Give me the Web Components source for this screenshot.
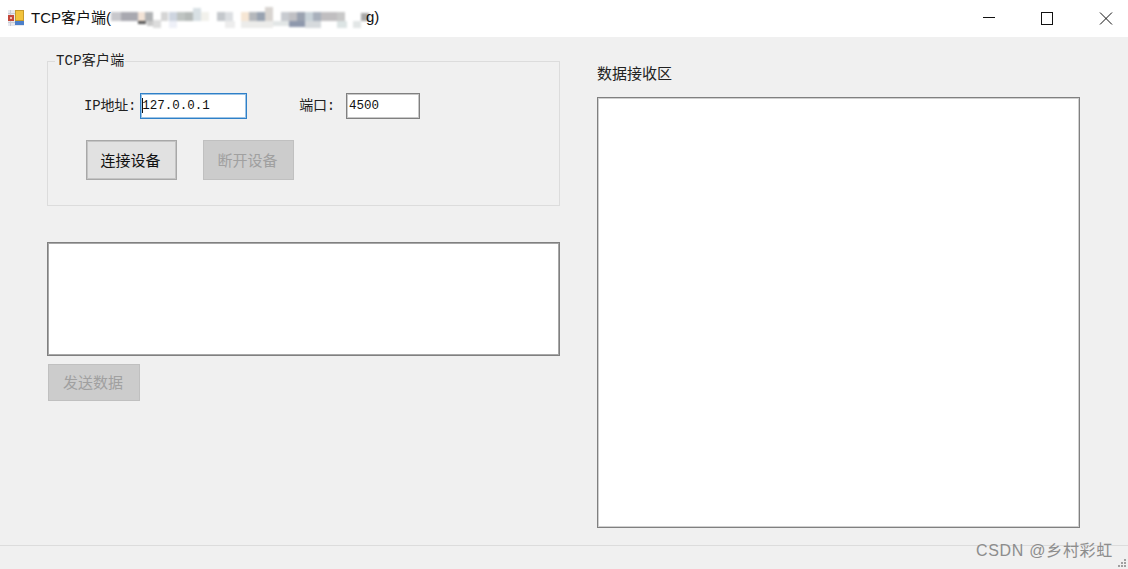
<!DOCTYPE html>
<html>
<head>
<meta charset="utf-8">
<title>TCP客户端</title>
<style>
  html, body { margin: 0; padding: 0; background: #f0f0f0; }
</style>
</head>
<body>
<tcp-window>
  <title-bar slot="title"></title-bar>
  <div slot="left">
    <group-box label="TCP客户端">
      <form-row>
        <form-field label="IP地址:" value="127.0.0.1" width="107" focused></form-field>
        <form-field label="端口:" value="4500" width="74" class="port"></form-field>
      </form-row>
      <form-row class="btns">
        <win-button>连接设备</win-button>
        <win-button disabled>断开设备</win-button>
      </form-row>
    </group-box>
    <text-area-box h="114"></text-area-box>
    <win-button disabled class="send">发送数据</win-button>
  </div>
  <recv-panel slot="right" label="数据接收区"></recv-panel>
</tcp-window>

<script>
var FONT = '"Liberation Sans", "Noto Sans CJK SC", sans-serif';
var MONO = '"Liberation Mono", "Noto Sans CJK SC", monospace';

//main window, title on top, two columns, status bar at the bottom
var template_window = document.createElement("template");
template_window.innerHTML = `
<style>
  :host { display: flex; flex-direction: column; width: 1128px; height: 569px; overflow: hidden; background: #f0f0f0; position: relative; }
  #body { flex: 1; display: flex; padding: 24px 48px 0 47px; gap: 37px; min-height: 0; }
  #left { width: 513px; flex: none; }
  #right { flex: 1; }
  #status { height: 23px; flex: none; border-top: 1px solid #dcdcdc; display: flex; justify-content: flex-end; align-items: center; }
  #mark { font: 16px ${FONT}; color: #8d8d8d; letter-spacing: 0.7px; margin: 0 15px 0 0; position: relative; top: -9px; }
  svg { position: absolute; right: 0; bottom: 0; }
</style>
<slot name="title"></slot>
<div id="body">
  <div id="left"><slot name="left"></slot></div>
  <div id="right"><slot name="right"></slot></div>
</div>
<div id="status">
  <span id="mark">CSDN @乡村彩虹</span>
  <svg width="12" height="12" fill="#a0a0a0"><rect x="8" y="2" width="2" height="2"/><rect x="5" y="5" width="2" height="2"/><rect x="8" y="5" width="2" height="2"/><rect x="2" y="8" width="2" height="2"/><rect x="5" y="8" width="2" height="2"/><rect x="8" y="8" width="2" height="2"/></svg>
</div>
`;
class TcpWindow extends HTMLElement {
  constructor(){
    super();
    this.attachShadow({mode:"open"});
    this.shadowRoot.appendChild(template_window.content.cloneNode(true));
  }
}

//title bar with app icon, text, mosaic and window buttons
var template_title = document.createElement("template");
template_title.innerHTML = `
<style>
  :host { display: flex; align-items: center; height: 37px; flex: none; background: #fff; font: 15px ${FONT}; color: #111; }
  #icon { margin: 0 6px 0 7px; flex: none; }
  #text, #text2 { white-space: nowrap; position: relative; top: -2px; }
  #text2 { margin-left: -3px; }
  #mosaic { flex: none; filter: blur(0.8px); }
  #ctl { margin-left: auto; display: flex; gap: 15px; }
  .b { width: 44px; height: 37px; display: flex; align-items: center; justify-content: center; }
</style>
<svg id="icon" width="18" height="18" viewBox="0 0 18 18">
  <rect x="1" y="0" width="16" height="16" fill="#e6e8ee"/>
  <path d="M1 3.5H8M1 12.5H8M3.5 0V16" stroke="#c8ccd6" fill="none"/>
  <rect x="1" y="5" width="6" height="6" fill="#c4473a"/>
  <rect x="3" y="7" width="2" height="2" fill="#eebbb0"/>
  <rect x="8.5" y="0.5" width="8" height="10" fill="#f2c33c" stroke="#c79a2c"/>
  <rect x="8" y="11" width="9" height="4" fill="#4c7fc9"/>
</svg>
<span id="text">TCP客户端(</span>
<svg id="mosaic" width="258" height="26" viewBox="110 5 258 26"></svg>
<span id="text2">g)</span>
<div id="ctl">
  <div class="b"><svg width="14" height="13"><path d="M2 5.5H14" stroke="#111" fill="none"/></svg></div>
  <div class="b"><svg width="14" height="13"><rect x="1.5" y="0.5" width="11" height="12" stroke="#111" fill="none"/></svg></div>
  <div class="b"><svg width="14" height="13"><path d="M1 0.5L13 12.5M13 0.5L1 12.5" stroke="#111" fill="none"/></svg></div>
</div>
`;
class TitleBar extends HTMLElement {
  constructor(){
    super();
    this.attachShadow({mode:"open"});
    this.shadowRoot.appendChild(template_title.content.cloneNode(true));
  }
  connectedCallback(){
    //blocks of the blurred out part, in page coordinates: x, y, w, h, colour
    var blocks = [
      [110,11,10,9,"#c8c8cc"],[120,11,17,9,"#a8a8b0"],[137,11,7,9,"#f3e3d6"],[144,11,8,9,"#b0b2b4"],
      [160,11,7,9,"#d5d5d5"],[168,11,8,9,"#ced5e0"],[176,11,8,9,"#bfc4c2"],[184,11,8,9,"#b5bab8"],
      [192,7,8,13,"#d8e0e4"],[200,11,8,9,"#f2f1ec"],
      [216,11,8,9,"#c4c8cc"],[224,11,8,9,"#dcdfe2"],
      [240,11,8,9,"#f6e6d4"],[248,11,8,9,"#b5b8bc"],[256,11,8,9,"#98a2b0"],[264,6,8,14,"#d8d4d0"],
      [280,11,8,9,"#c8cbd0"],[288,11,8,9,"#c0c0c4"],[296,11,8,9,"#9aa2b0"],[304,11,8,9,"#c8d2d8"],
      [312,11,8,9,"#a8b0bc"],[320,11,16,9,"#c0bec0"],[336,11,8,9,"#c8c8c8"],[360,12,8,8,"#a8a8a8"],
      [137,20,8,3,"#555"],[146,20,8,5,"#c8c8c8"],[152,19,8,8,"#dcdcdc"],[168,20,8,7,"#eef0f8"],
      [224,20,10,7,"#ededed"],[240,20,32,7,"#ececea"],[272,20,16,5,"#e2e6e6"],
      [288,20,16,6,"#8e98ac"],[304,20,16,7,"#d6dadd"],[336,20,10,7,"#dce4e4"],[352,20,8,7,"#e2e6e6"]
    ];
    var svg = this.shadowRoot.querySelector("#mosaic");
    var html = "";
    blocks.forEach(function(b){
      html += '<rect x="'+b[0]+'" y="'+b[1]+'" width="'+b[2]+'" height="'+b[3]+'" fill="'+b[4]+'"/>';
    });
    svg.innerHTML = html;
  }
}

//frame with caption cutting the top border
var template_group = document.createElement("template");
template_group.innerHTML = `
<style>
  :host { display: block; height: 145px; box-sizing: border-box; border: 1px solid #dcdcdc; position: relative; padding: 31px 0 0 36px; }
  #cap { position: absolute; left: 7px; top: -13px; background: #f0f0f0; padding: 0 1px; font: 14px ${MONO}; color: #222; letter-spacing: 0.2px; }
</style>
<span id="cap"></span>
<slot></slot>
`;
class GroupBox extends HTMLElement {
  constructor(){
    super();
    this.attachShadow({mode:"open"});
    this.shadowRoot.appendChild(template_group.content.cloneNode(true));
  }
  connectedCallback(){
    this.shadowRoot.querySelector("#cap").textContent = this.getAttribute("label");
  }
}

var template_row = document.createElement("template");
template_row.innerHTML = `
<style>
  :host { display: flex; gap: 52px; align-items: flex-start; }
  :host(.btns) { gap: 26px; margin: 21px 0 0 2px; }
</style>
<slot></slot>
`;
class FormRow extends HTMLElement {
  constructor(){
    super();
    this.attachShadow({mode:"open"});
    this.shadowRoot.appendChild(template_row.content.cloneNode(true));
  }
}

//label + text box
var template_field = document.createElement("template");
template_field.innerHTML = `
<style>
  :host { display: flex; align-items: center; gap: 4px; font: 14px ${MONO}; color: #222; }
  :host(.port) { gap: 11px; }
  #lab { white-space: nowrap; letter-spacing: -0.2px; position: relative; top: -2px; }
  #box { height: 26px; box-sizing: border-box; background: #fff; border: 1px solid #808080; box-shadow: inset 0 0 0 1px #c8c8c8; padding: 0 0 1px 2px; display: flex; align-items: center; font: 12.5px ${MONO}; color: #111; }
  :host([focused]) #box { border-color: #2f80c8; box-shadow: inset 0 0 0 1px #9cc4e6; padding-left: 1px; }
  :host([focused]) #box::before { content: ""; flex: none; width: 1px; height: 15px; background: #111; margin-right: -1px; }
</style>
<span id="lab"></span>
<div id="box"></div>
`;
class FormField extends HTMLElement {
  constructor(){
    super();
    this.attachShadow({mode:"open"});
    this.shadowRoot.appendChild(template_field.content.cloneNode(true));
  }
  connectedCallback(){
    this.shadowRoot.querySelector("#lab").textContent = this.getAttribute("label");
    var box = this.shadowRoot.querySelector("#box");
    box.append(this.getAttribute("value"));
    box.style.width = this.getAttribute("width") + "px";
  }
}

var template_button = document.createElement("template");
template_button.innerHTML = `
<style>
  :host { display: flex; align-items: center; justify-content: center; box-sizing: border-box; width: 91px; height: 40px; padding: 0 2px 2px 0; background: #e1e1e1; border: 1px solid #a8a8a8; box-shadow: inset 0 0 0 1px #c4c4c4; font: 15px ${FONT}; color: #111; }
  :host([disabled]) { background: #cccccc; border-color: #c0c0c0; box-shadow: none; color: #a0a0a0; }
  :host(.send) { width: 92px; height: 37px; margin: 8px 0 0 1px; }
</style>
<slot></slot>
`;
class WinButton extends HTMLElement {
  constructor(){
    super();
    this.attachShadow({mode:"open"});
    this.shadowRoot.appendChild(template_button.content.cloneNode(true));
  }
}

var template_area = document.createElement("template");
template_area.innerHTML = `
<style>
  :host { display: block; box-sizing: border-box; margin-top: 36px; background: #fff; border: 1px solid #808080; box-shadow: inset 0 0 0 1px #a8a8a8; }
</style>
`;
class TextAreaBox extends HTMLElement {
  constructor(){
    super();
    this.attachShadow({mode:"open"});
    this.shadowRoot.appendChild(template_area.content.cloneNode(true));
  }
  connectedCallback(){
    this.style.height = this.getAttribute("h") + "px";
  }
}

var template_recv = document.createElement("template");
template_recv.innerHTML = `
<style>
  :host { display: block; }
  #lab { font: 15px ${FONT}; color: #222; height: 36px; padding-top: 1px; box-sizing: border-box; }
  #box { width: 483px; height: 431px; box-sizing: border-box; background: #fff; border: 1px solid #808080; box-shadow: inset 0 0 0 1px #d0d0d0; }
</style>
<div id="lab"></div>
<div id="box"></div>
`;
class RecvPanel extends HTMLElement {
  constructor(){
    super();
    this.attachShadow({mode:"open"});
    this.shadowRoot.appendChild(template_recv.content.cloneNode(true));
  }
  connectedCallback(){
    this.shadowRoot.querySelector("#lab").textContent = this.getAttribute("label");
  }
}

customElements.define("tcp-window", TcpWindow);
customElements.define("title-bar", TitleBar);
customElements.define("group-box", GroupBox);
customElements.define("form-row", FormRow);
customElements.define("form-field", FormField);
customElements.define("win-button", WinButton);
customElements.define("text-area-box", TextAreaBox);
customElements.define("recv-panel", RecvPanel);
</script>
</body>
</html>
